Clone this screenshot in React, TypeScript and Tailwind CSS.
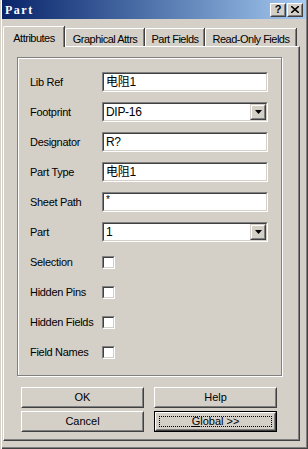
import React from "react";

const FONT = { fontFamily: '"Liberation Sans", "Noto Sans CJK SC", Arial, sans-serif' };

function Sunken({ children, select, top }: { children?: React.ReactNode; select?: boolean; top?: boolean }) {
  return (
    <div className="w-[166px] h-[20px] border border-t-[#808080] border-l-[#808080] border-b-white border-r-white">
      <div className={"h-full border border-t-[#404040] border-l-[#404040] border-b-[#d4d0c8] border-r-[#d4d0c8] bg-white flex " + (top ? "items-start" : "items-center")}>
        <div className={"flex-1 pl-[2px] leading-none text-black tracking-[-0.3px] whitespace-nowrap " + (top ? "text-[10px] pt-[1px]" : "text-[12px]")}>{children}</div>
        {select && (
          <div className="w-[16px] h-[16px] border border-t-[#d4d0c8] border-l-[#d4d0c8] border-b-[#404040] border-r-[#404040]">
            <div className="h-full border border-t-white border-l-white border-b-[#808080] border-r-[#808080] bg-[#d4d0c8] flex items-center justify-center">
              <svg width="7" height="4" viewBox="0 0 7 4"><path d="M0 0h7L3.5 4z" fill="#000" /></svg>
            </div>
          </div>
        )}
      </div>
    </div>
  );
}

function Check() {
  return (
    <div className="w-[13px] h-[13px] border border-t-[#808080] border-l-[#808080] border-b-white border-r-white">
      <div className="h-full border border-t-[#404040] border-l-[#404040] border-b-[#d4d0c8] border-r-[#d4d0c8] bg-white" />
    </div>
  );
}

function Btn({ children, def }: { children: React.ReactNode; def?: boolean }) {
  const inner = (
    <div className="h-full border border-t-white border-l-white border-b-[#404040] border-r-[#404040]">
      <div className="h-full border border-t-[#d4d0c8] border-l-[#d4d0c8] border-b-[#808080] border-r-[#808080] flex items-center justify-center">
        {def ? (
          <div className="w-full h-full p-[2px]">
            <div className="w-full h-full border border-dotted border-black flex items-center justify-center text-[11px]">{children}</div>
          </div>
        ) : (
          <span className="text-[11px]">{children}</span>
        )}
      </div>
    </div>
  );
  return (
    <div className={"w-[123px] h-[21px] " + (def ? "border border-black" : "")}>{inner}</div>
  );
}

const rows: { label: string; value?: string; select?: boolean; check?: boolean; top?: boolean }[] = [
  { label: "Lib Ref", value: "电阻1" },
  { label: "Footprint", value: "DIP-16", select: true },
  { label: "Designator", value: "R?" },
  { label: "Part Type", value: "电阻1" },
  { label: "Sheet Path", value: "*", top: true },
  { label: "Part", value: "1", select: true },
  { label: "Selection", check: true },
  { label: "Hidden Pins", check: true },
  { label: "Hidden Fields", check: true },
  { label: "Field Names", check: true },
];

export default function App() {
  return (
    <div
      style={FONT}
      className="w-[308px] h-[449px] bg-[#d4d0c8] text-black text-[11px] shadow-[inset_1px_0_0_#d4d0c8,inset_2px_0_0_#fff,inset_-1px_-1px_0_#404040,inset_-2px_-2px_0_#808080] flex flex-col"
    >
      <div className="mx-[2px] h-[19px] bg-gradient-to-r from-[#0a246a] to-[#a6caf0] flex items-center justify-between pl-[3px] pr-[3px]">
        <span className="text-white font-bold text-[12px] tracking-[1.5px]" style={{ fontFamily: '"Liberation Serif", serif' }}>Part</span>
        <div className="flex gap-[1px]">
          {["?", "x"].map((c) => (
            <div key={c} className="w-[16px] h-[14px] border border-t-white border-l-white border-b-[#404040] border-r-[#404040] bg-[#d4d0c8]">
              <div className="h-full border border-t-[#d4d0c8] border-l-[#d4d0c8] border-b-[#808080] border-r-[#808080] flex items-center justify-center font-bold text-[11px] leading-none">
                {c === "?" ? "?" : <svg width="8" height="7" viewBox="0 0 8 7"><path d="M0 0l8 7M8 0L0 7" stroke="#000" strokeWidth="1.6" /></svg>}
              </div>
            </div>
          ))}
        </div>
      </div>

      <div className="ml-[3px] mt-[7px] w-[297px] relative">
        <div className="flex h-[20px] items-end tracking-[-0.5px]">
          <div className="relative z-10 w-[61px] h-[21px] -mb-[1px] bg-[#d4d0c8] border-l border-t border-white rounded-tl-[2px] shadow-[inset_-1px_0_0_#808080,1px_0_0_#404040] flex items-start justify-center pt-[3px]">Attributes</div>
          <div className="ml-[1px] w-[79px] h-[18px] border-l border-t border-white rounded-tl-[2px] shadow-[inset_-1px_0_0_#808080,1px_0_0_#404040] flex items-start justify-center pt-[2px]">Graphical Attrs</div>
          <div className="ml-[1px] w-[59px] h-[18px] border-l border-t border-white rounded-tl-[2px] shadow-[inset_-1px_0_0_#808080,1px_0_0_#404040] flex items-start justify-center pt-[2px]">Part Fields</div>
          <div className="ml-[1px] w-[91px] h-[18px] border-l border-t border-white rounded-tl-[2px] shadow-[inset_-1px_0_0_#808080,1px_0_0_#404040] flex items-start justify-center pt-[2px]">Read-Only Fields</div>
        </div>
        <div className="h-[395px] border-l border-t border-white border-r border-b border-r-[#404040] border-b-[#404040]">
          <div className="h-full border-r border-b border-r-[#808080] border-b-[#808080] pl-[13px] pt-[10px]">
            <div className="w-[265px] h-[319px] border border-[#808080] shadow-[inset_1px_1px_0_#fff,1px_1px_0_#fff] pt-[9px] pl-[12px]">
              {rows.map((r) => (
                <div key={r.label} className="h-[30px] flex items-center">
                  <div className="w-[72px] tracking-[-0.3px]">{r.label}</div>
                  {r.check ? <Check /> : <Sunken select={r.select} top={r.top}>{r.value}</Sunken>}
                </div>
              ))}
            </div>
            <div className="mt-[11px] ml-[4px] grid grid-cols-[123px_123px] gap-x-[10px] gap-y-[3px]">
              <Btn>OK</Btn>
              <Btn>Help</Btn>
              <Btn>Cancel</Btn>
              <Btn def><span><u>G</u>lobal &gt;&gt;</span></Btn>
            </div>
          </div>
        </div>
      </div>
    </div>
  );
}
